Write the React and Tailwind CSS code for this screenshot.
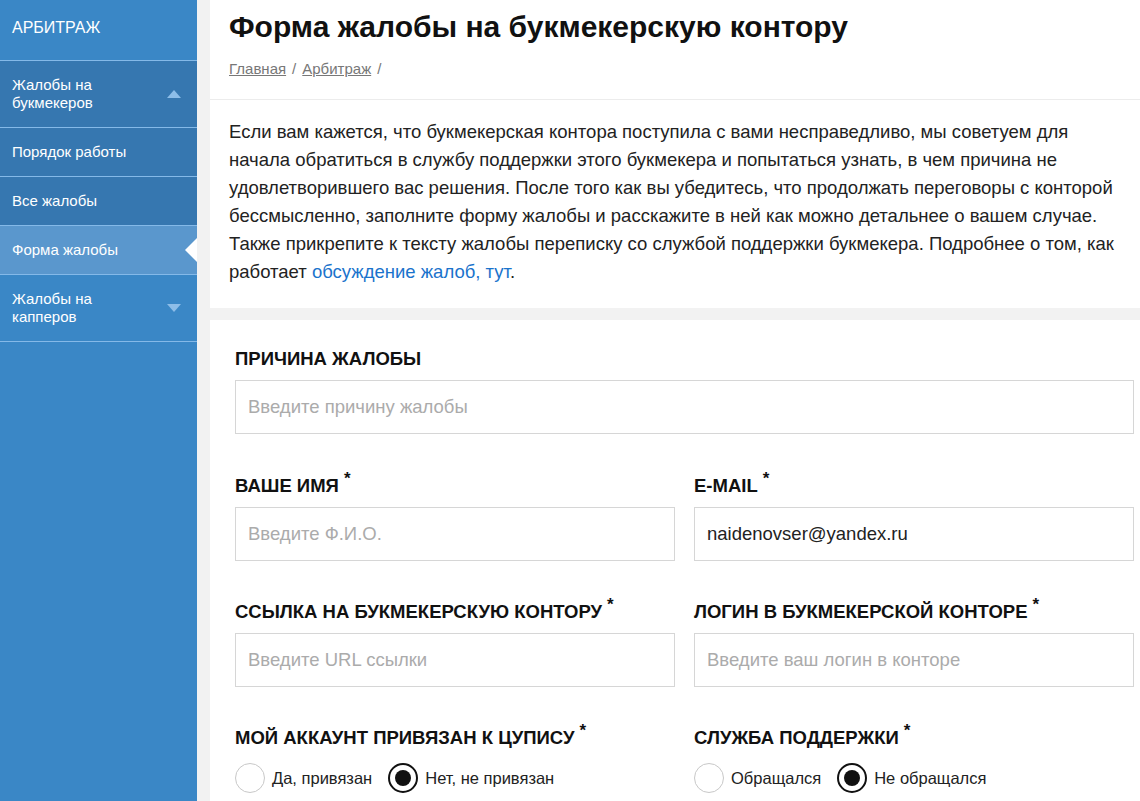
import React from "react";

const font = { fontFamily: '"Liberation Sans", Arial, sans-serif' };

function Caret({ up }) {
  return (
    <svg width="14" height="8" viewBox="0 0 14 8" className="shrink-0">
      {up ? (
        <polygon points="0,8 7,0 14,8" fill="#8dbde8" />
      ) : (
        <polygon points="0,0 7,8 14,0" fill="#8dbde8" />
      )}
    </svg>
  );
}

function SideItem({ children, bg, caret, active }) {
  return (
    <div
      className={`relative flex items-center justify-between pl-[12px] pr-[16px] py-[15px] text-[15px] leading-[18px] text-white border-b border-[#84b9e8] ${bg}`}
    >
      <span>{children}</span>
      {caret}
      {active && (
        <span className="absolute right-0 top-1/2 -translate-y-1/2 w-0 h-0 border-y-[12px] border-y-transparent border-r-[12px] border-r-white" />
      )}
    </div>
  );
}

function Label({ children, req }) {
  return (
    <div className="h-[20px] leading-[20px] text-[18.5px] font-bold text-[#111] uppercase mb-[11px] whitespace-nowrap">
      {children}
      {req && <span className="relative -top-[8px] ml-[5px] text-[17px]">*</span>}
    </div>
  );
}

function Input({ placeholder, value }) {
  return (
    <div className="h-[54px] border border-[#d6d6d6] flex items-center px-[12px] text-[18.5px]">
      {value ? (
        <span className="text-[#222]">{value}</span>
      ) : (
        <span className="text-[#ababab]">{placeholder}</span>
      )}
    </div>
  );
}

function Radio({ checked, label }) {
  return (
    <div className="flex items-center gap-[7px]">
      {checked ? (
        <span className="w-[30px] h-[30px] rounded-full border-2 border-[#111] flex items-center justify-center">
          <span className="w-[16px] h-[16px] rounded-full bg-[#111]" />
        </span>
      ) : (
        <span className="w-[30px] h-[30px] rounded-full border border-[#c8c8c8]" />
      )}
      <span className="text-[16.5px] text-[#222]">{label}</span>
    </div>
  );
}

const lines = [
  "Если вам кажется, что букмекерская контора поступила с вами несправедливо, мы советуем для",
  "начала обратиться в службу поддержки этого букмекера и попытаться узнать, в чем причина не",
  "удовлетворившего вас решения. После того как вы убедитесь, что продолжать переговоры с конторой",
  "бессмысленно, заполните форму жалобы и расскажите в ней как можно детальнее о вашем случае.",
  "Также прикрепите к тексту жалобы переписку со службой поддержки букмекера. Подробнее о том, как",
];

export default function App() {
  return (
    <div className="flex min-h-screen bg-[#f2f2f2]" style={font}>
      <aside className="w-[197px] shrink-0 bg-[#3a87c6] min-h-screen">
        <div className="h-[61px] flex items-center pl-[12px] pb-[4px] text-[16px] text-white uppercase border-b border-[#84b9e8]">
          Арбитраж
        </div>
        <SideItem bg="bg-[#3677b0]" caret={<Caret up />}>
          Жалобы на<br />букмекеров
        </SideItem>
        <SideItem bg="bg-[#3677b0]">Порядок работы</SideItem>
        <SideItem bg="bg-[#3677b0]">Все жалобы</SideItem>
        <SideItem bg="bg-[#5a97cd]" active>Форма жалобы</SideItem>
        <SideItem bg="bg-[#3a87c6]" caret={<Caret />}>
          Жалобы на<br />капперов
        </SideItem>
      </aside>

      <main className="flex-1 min-w-0 ml-[13px] flex flex-col">
        <div className="bg-white">
          <header className="px-[19px] pt-[10px] pb-[20px] border-b border-[#ececec]">
            <h1 className="text-[30px] leading-[34px] font-bold text-[#111]">
              Форма жалобы на букмекерскую контору
            </h1>
            <div className="mt-[15px] text-[15px] leading-[20px] text-[#777]">
              <span className="underline">Главная</span>
              <span className="mx-[6px]">/</span>
              <span className="underline">Арбитраж</span>
              <span className="mx-[6px]">/</span>
            </div>
          </header>
          <section className="pl-[19px] pr-[4px] pt-[18px] pb-[22px] text-[18.5px] leading-[28px] text-[#222]">
            {lines.map((l) => (
              <div key={l} className="whitespace-nowrap">{l}</div>
            ))}
            <div className="whitespace-nowrap">
              работает <span className="text-[#1a73cc]">обсуждение жалоб, тут</span>.
            </div>
          </section>
        </div>

        <section className="bg-white mt-[12px] flex-1 pl-[25px] pr-[6px] pt-[29px] pb-[20px]">
          <Label>Причина жалобы</Label>
          <Input placeholder="Введите причину жалобы" />

          <div className="grid grid-cols-2 gap-x-[19px] mt-[42px]">
            <div>
              <Label req>Ваше имя</Label>
              <Input placeholder="Введите Ф.И.О." />
            </div>
            <div>
              <Label req>E-mail</Label>
              <Input value="naidenovser@yandex.ru" />
            </div>
          </div>

          <div className="grid grid-cols-2 gap-x-[19px] mt-[41px]">
            <div>
              <Label req>Ссылка на букмекерскую контору</Label>
              <Input placeholder="Введите URL ссылки" />
            </div>
            <div>
              <Label req>Логин в букмекерской конторе</Label>
              <Input placeholder="Введите ваш логин в конторе" />
            </div>
          </div>

          <div className="grid grid-cols-2 gap-x-[19px] mt-[41px]">
            <div>
              <Label req>Мой аккаунт привязан к ЦУПИСу</Label>
              <div className="flex items-center gap-[16px] mt-[15px]">
                <Radio label="Да, привязан" />
                <Radio checked label="Нет, не привязан" />
              </div>
            </div>
            <div>
              <Label req>Служба поддержки</Label>
              <div className="flex items-center gap-[16px] mt-[15px]">
                <Radio label="Обращался" />
                <Radio checked label="Не обращался" />
              </div>
            </div>
          </div>
        </section>
      </main>
    </div>
  );
}
